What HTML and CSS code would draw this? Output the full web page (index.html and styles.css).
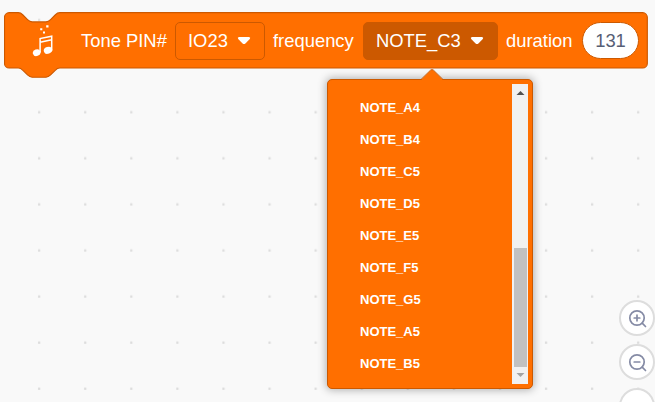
FILE: index.html
```html
<!DOCTYPE html>
<html lang="en">
<head>
<meta charset="utf-8">
<title>Tone block</title>
<link rel="stylesheet" href="styles.css">
</head>
<body>
<main class="workspace">
  <svg class="grid" width="655" height="402" aria-hidden="true">
    <defs><pattern id="dots" x="15.5" y="-3.2" width="46.08" height="46.08" patternUnits="userSpaceOnUse"><rect x="22.5" y="22.1" width="2.3" height="2.3" fill="#ddd"/></pattern></defs>
    <rect width="655" height="402" fill="url(#dots)"/>
  </svg>
  <section class="block">
    <svg class="shape" width="650" height="72" viewBox="0 0 650 72" aria-hidden="true">
      <path transform="translate(.5 .7) scale(1.152)" d="M0 4A4 4 0 0 1 4 0H12c2 0 3 1 4 2l4 4c1 1 2 2 4 2h12c2 0 3-1 4-2l4-4c1-1 2-2 4-2H554a4 4 0 0 1 4 4V44a4 4 0 0 1-4 4H48c-2 0-3 1-4 2l-4 4c-1 1-2 2-4 2H24c-2 0-3-1-4-2l-4-4c-1-1-2-2-4-2H4a4 4 0 0 1-4-4Z" fill="#ff6f00" stroke="#cc5900"/>
    </svg>
    <svg class="note" width="24" height="36" viewBox="0 0 24 36" aria-hidden="true">
      <g fill="#fff"><path d="M8.2 5.2h2.1v2.1H8.2zM14.2 2.3h2.3v2.2h-2.3zM11 8.5h2v2h-2z"/>
      <ellipse cx="4.7" cy="29.7" rx="3.9" ry="3.3" transform="rotate(-20 4.7 29.7)"/>
      <ellipse cx="16" cy="27.3" rx="4.3" ry="3.4" transform="rotate(-20 16 27.3)"/></g>
      <path d="M8.1 29.5V15.5L19.7 13.2V27.5M8.1 19.2l11.6-2.4" fill="none" stroke="#fff" stroke-width="1.5"/>
    </svg>
    <span class="label tone">Tone PIN#</span>
    <div class="field pin"><span>IO23</span><svg class="caret" width="14" height="9" viewBox="0 0 14 9"><path d="M2 1H12Q14 1.5 12.8 3L8.4 7.4Q7 8.5 5.6 7.4L1.2 3Q0 1.5 2 1Z" fill="#fff"/></svg></div>
    <span class="label frequency">frequency</span>
    <div class="field pitch"><span>NOTE_C3</span><svg class="caret" width="14" height="9" viewBox="0 0 14 9"><path d="M2 1H12Q14 1.5 12.8 3L8.4 7.4Q7 8.5 5.6 7.4L1.2 3Q0 1.5 2 1Z" fill="#fff"/></svg></div>
    <span class="label duration">duration</span>
    <div class="number">131</div>
  </section>

  <div class="menu">
    <svg class="arrow" width="24" height="12" viewBox="0 0 24 12"><path d="M1 11L10.5 1.5Q12 .2 13.5 1.5L23 11V12H1Z" fill="#ff6f00"/><path d="M1 10.5L10.5 1.2Q12 0 13.5 1.2L23 10.5" fill="none" stroke="#cc5900"/></svg>
    <ul class="options">
      <li>NOTE_A4</li><li>NOTE_B4</li><li>NOTE_C5</li><li>NOTE_D5</li><li>NOTE_E5</li><li>NOTE_F5</li><li>NOTE_G5</li><li>NOTE_A5</li><li>NOTE_B5</li>
    </ul>
    <div class="scrollbar">
      <svg width="16" height="17"><path d="M4.5 11L8.5 7L12.5 11Z" fill="#505050"/></svg>
      <div class="thumb"></div>
      <svg width="16" height="17"><path d="M4.5 6L8.5 10L12.5 6Z" fill="#a3a3a3"/></svg>
    </div>
  </div>

  <div class="zoom">
    <div class="button"><svg width="20" height="20" viewBox="0 0 20 20"><path d="M14.2 14.2L17.5 17.5M6.2 9H11.8M9 6.2V11.8" /><circle cx="9" cy="9" r="7.2"/></svg></div>
    <div class="button"><svg width="20" height="20" viewBox="0 0 20 20"><path d="M14.2 14.2L17.5 17.5M6.2 9H11.8"/><circle cx="9" cy="9" r="7.2"/></svg></div>
    <div class="button"></div>
  </div>
</main>
</body>
</html>
```
FILE: styles.css
```css
* { box-sizing: border-box; }
body { margin: 0; font-family: "Liberation Sans", Arial, sans-serif; }
.workspace { position: relative; width: 655px; height: 402px; overflow: hidden; background: #f9f9f9; padding: 12px 0 0 4px; }
.grid { position: absolute; inset: 0; }
.block { position: relative; display: flex; align-items: center; width: 644px; height: 57px; color: #fff; font-size: 18.4px; white-space: nowrap; }
.shape { position: absolute; left: 0; top: 0; }
.block > :not(.shape) { position: relative; flex: none; }
.note { margin-left: 28px; }
.tone { width: 94px; margin-left: 25px; }
.field { display: flex; align-items: center; justify-content: space-between; height: 38px; border: 1px solid #cc5900; border-radius: 5px; padding: 0 13.5px 0 12px; }
.pin { width: 90px; }
.frequency { width: 90px; margin-left: 8px; }
.pitch { width: 135px; background: #cc5900; }
.duration { width: 76px; margin-left: 8px; }
.number { width: 57px; height: 37px; line-height: 35px; border: 1px solid #cc5900; border-radius: 19px; background: #fff; color: #575e75; text-align: center; }
.menu { position: absolute; left: 327px; top: 79px; display: flex; justify-content: space-between; width: 206px; height: 310px; padding: 4px; border: 1px solid #cc5900; border-radius: 5px; background: #ff6f00; box-shadow: 0 0 9px 1px rgba(0,0,0,.3); }
.arrow { position: absolute; left: 92px; top: -11px; }
.options { margin: 0; padding: 8px 0 0 28px; list-style: none; color: #fff; font-size: 13px; font-weight: bold; }
.options li { height: 32px; line-height: 32px; }
.scrollbar { display: flex; flex-direction: column; justify-content: space-between; width: 16px; height: 300px; background: #f1f1f1; }
.thumb { width: 13px; height: 119px; margin: auto 0 0 2px; background: #c1c1c1; }
.zoom { position: absolute; left: 619px; top: 300px; display: flex; flex-direction: column; gap: 8px; }
.button { display: flex; align-items: center; justify-content: center; width: 36px; height: 36px; border: 2px solid #ddd; border-radius: 50%; background: #fff; }
.button svg { margin: 1px 0 0 1px; fill: none; stroke: #858ba5; stroke-width: 1.7; stroke-linecap: round; }
```
